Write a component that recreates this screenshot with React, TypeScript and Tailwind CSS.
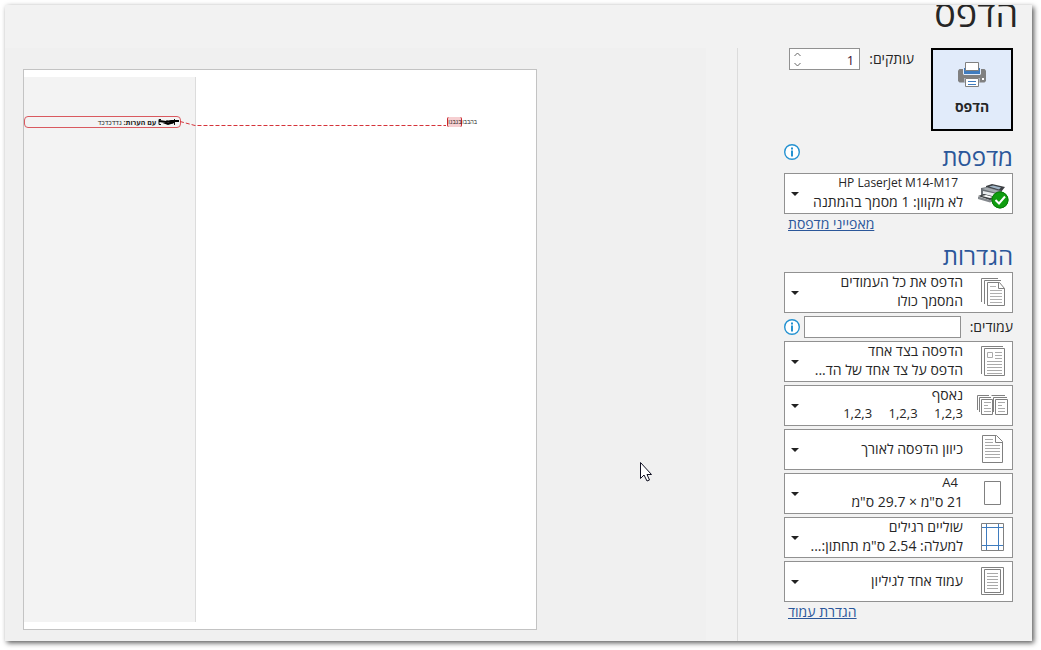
import { useState } from "react";
import type { ReactNode } from "react";

interface SettingProps {
  label: string;
  title: string;
  detail?: string;
  titleClass?: string;
  detailClass?: string;
  icon: ReactNode;
}

// Shared 34x34 canvas for the icons of the settings list
function IconBox({ children }: { children: ReactNode }) {
  return (
    <svg
      viewBox="0 0 34 34"
      className="h-[34px] w-[34px] shrink-0"
      fill="none"
      stroke="#808080"
      aria-hidden="true"
    >
      {children}
    </svg>
  );
}

function PrintIcon() {
  return (
    <svg viewBox="0 0 28 26" className="h-[26px] w-7" fill="none" aria-hidden="true">
      <path d="M1.5 7h25L28 8.5V19l-1.500 1.500h-25L0 19V8.500z" fill="#808080" />
      <path d="M5 6h18v6l-1 1H6l-1-1z" fill="#e1ebfa" />
      <path d="M6 6h16v6H6z" fill="#3f7cbf" />
      <path d="M7.500.500h13v8h-13z" fill="#fff" stroke="#808080" />
      <path d="M6.500 16h15v4.500h-15z" fill="#e1ebfa" />
      <path d="M7.500 16.500h13v8h-13z" fill="#fff" stroke="#808080" />
      <path d="M10 19.500h8M10 22.500h8" stroke="#3f7cbf" />
      <path d="M24 16h2v2h-2z" fill="#fff" />
    </svg>
  );
}

function PrinterStatusIcon() {
  return (
    <IconBox>
      <g stroke="none">
        <path d="M11 10l6-2 13 3-4 5-15-4z" fill="#3c3f43" />
        <path d="M14 10.500l4-1 8 2-2 2z" fill="#9fb4c6" />
        <path d="M6 12l6-1 15 4v7l-10 3-11-5z" fill="#6b7076" />
        <path d="M7 13l5-1.500 12 3.500-4 1.500z" fill="#a5abb0" />
        <path d="M8 15l12 2.500v4L8 18z" fill="#e8ebee" />
        <path d="M3 20l6-2 12 3-6 3z" fill="#3c4044" />
        <path d="M7 20l4-1 7 2-3 1z" fill="#fff" />
        <path d="M3 20.500l12 3.500 6-2v2l-6 2.500L3 23z" fill="#85898e" />
        <circle cx="25" cy="24" r="8.500" fill="#0f9d0f" />
      </g>
      <circle cx="25" cy="24" r="8" stroke="#0a7d0a" />
      <path d="M20.500 24l3.500 3.500 6-7" stroke="#fff" strokeWidth="2" />
    </IconBox>
  );
}

function AllPagesIcon() {
  return (
    <IconBox>
      <path d="M6.500 27V3.500H23M9.500 29V5.500H26" />
      <path d="M12.500 7.500h12l5 6v17h-17z" fill="#fff" />
      <path d="M23.500 7.500v6h6" />
      <path d="M15 11.500h6M15 15.500h12M15 18.500h12M15 21.500h12M15 24.500h12M15 27.500h12" stroke="#b0b0b0" />
    </IconBox>
  );
}

function OneSidedIcon() {
  return (
    <IconBox>
      <path d="M6.500 30V2.500H28" />
      <path d="M9.500 4.500h20v27h-20z" fill="#fff" />
      <path d="M12.500 8.500h5v5h-5zM20 8.500h7M20 11.500h7M20 14.500h7M12 17.500h15M12 20.500h15M12 23.500h15M12 26.500h15M12 29.500h15" stroke="#aaa" />
    </IconBox>
  );
}

function CollatedIcon() {
  return (
    <IconBox>
      <path d="M2.500 22V7.500H14M4.500 24V9.500H16M16.500 7.500H30M18.500 24V9.500H32" />
      <path d="M6.500 11.500h11v15h-11zM20.500 11.500h12v15h-12z" fill="#fff" />
      <path d="M9 14.500h7M9 17.500h4M9 20.500h7M9 23.500h7M23 14.500h7M23 17.500h4M23 20.500h7M23 23.500h7" stroke="#aaa" />
    </IconBox>
  );
}

function PortraitIcon() {
  return (
    <IconBox>
      <path d="M7.500 3.500h14l6 6v21h-20z" fill="#fff" />
      <path d="M20.500 3.500v7h7" />
      <path d="M10 7.500h8M10 10.500h8M10 13.500h15M10 16.500h15M10 19.500h15M10 22.500h15M10 25.500h15" stroke="#aaa" />
    </IconBox>
  );
}

function PaperIcon() {
  return (
    <IconBox>
      <path d="M9.500 5.500h16v23h-16z" />
    </IconBox>
  );
}

function MarginsIcon() {
  return (
    <IconBox>
      <path d="M6.500 3.500h22v27h-22z" />
      <path d="M11.500 4v26M23.500 4v26M7 7.500h21M7 25.500h21" stroke="#3f7cbf" />
    </IconBox>
  );
}

function PerSheetIcon() {
  return (
    <IconBox>
      <path d="M6.500 3.500h22v27h-22zM9.500 5.500h16v23h-16z" />
      <path d="M12 9.500h11M12 12.500h11M12 15.500h11M12 18.500h11M12 21.500h11M12 24.500h11" stroke="#aaa" />
    </IconBox>
  );
}

function InfoButton({ label }: { label: string }) {
  return (
    <button type="button" aria-label={label} className="h-4 w-4 shrink-0">
      <svg viewBox="0 0 16 16" className="h-4 w-4" fill="none" aria-hidden="true">
        <circle cx="8" cy="8" r="7.300" fill="#fff" stroke="#2492d1" strokeWidth="1.400" />
        <path d="M7 3.500h2v2H7zM7 6.500h2v6H7z" fill="#2492d1" />
      </svg>
    </button>
  );
}

function Setting({ label, title, detail, titleClass, detailClass, icon }: SettingProps) {
  return (
    <div className="relative flex h-[41px] items-center border border-[#919191] bg-white pr-[3px] pb-px pl-[6px] focus-within:border-[#2b579a]">
      {icon}
      <div className="min-w-0 flex-1 pr-3 pb-[2px] leading-[19px] whitespace-pre">
        <div className={titleClass}>{title}</div>
        {detail && <div className={detailClass}>{detail}</div>}
      </div>
      <svg viewBox="0 0 8 4" className="mt-[2px] mr-1 h-1 w-2 shrink-0" aria-hidden="true">
        <path d="M0 0h8L4 4z" fill="#222" />
      </svg>
      <select aria-label={label} className="absolute inset-0 h-full w-full cursor-default opacity-0">
        <option>{title}</option>
      </select>
    </div>
  );
}

function Sidebar() {
  const [copies, setCopies] = useState(1);
  const [pages, setPages] = useState("");

  return (
    <aside className="w-[295px] shrink-0 border-l border-[#dcdcdc] pr-[19px] pl-[46px]">
      <div className="flex items-start">
        <button
          type="button"
          className="flex h-[83px] w-[82px] flex-col items-center border-2 border-black bg-[#e1ebfa] pt-3 font-bold"
        >
          <PrintIcon />
          <span className="mt-2 leading-[22px]">הדפס</span>
        </button>
        <label htmlFor="copies" className="mr-[17px] leading-[21px]">
          עותקים:
        </label>
        <div className="mr-[9px] flex h-[22px] w-[71px] items-center border border-[#919191] bg-white">
          <input
            id="copies"
            type="number"
            min={1}
            value={copies}
            onChange={(e) => setCopies(Number(e.target.value))}
            className="w-full min-w-0 [appearance:textfield] bg-transparent pt-[3px] pr-[5px] text-right text-[13px] text-[#3a1030] outline-none [&::-webkit-inner-spin-button]:appearance-none"
          />
          <div className="ml-1 flex flex-col gap-[5px]">
            <button type="button" aria-label="הוסף עותק" onClick={() => setCopies(copies + 1)}>
              <svg viewBox="0 0 7 5" className="h-[5px] w-[7px]" fill="none" stroke="#666">
                <path d="M.500 4l3-3 3 3" />
              </svg>
            </button>
            <button
              type="button"
              aria-label="הפחת עותק"
              onClick={() => setCopies(Math.max(1, copies - 1))}
            >
              <svg viewBox="0 0 7 5" className="h-[5px] w-[7px]" fill="none" stroke="#666">
                <path d="M.500 1l3 3 3-3" />
              </svg>
            </button>
          </div>
        </div>
      </div>

      <div className="mt-[9px] flex h-[33px] items-start justify-between">
        <h2 className="text-[24px] leading-[34px] text-[#2b579a]">מדפסת</h2>
        <div className="pt-1">
          <InfoButton label="מצב המדפסת" />
        </div>
      </div>
      <Setting
        label="מדפסת"
        title="HP LaserJet M14-M17"
        detail="לא מקוון: 1 מסמך בהמתנה"
        titleClass="pr-[5px] text-[12px]"
        icon={<PrinterStatusIcon />}
      />
      <div className="flex h-[22px] justify-end pl-1">
        <a href="#printer" className="leading-[20px] text-[#2b579a] underline">
          מאפייני מדפסת
        </a>
      </div>

      <h2 className="mt-1 h-8 text-[24px] leading-[32px] text-[#2b579a]">הגדרות</h2>
      <div className="flex flex-col gap-[3px]">
        <Setting
          label="טווח הדפסה"
          title="הדפס את כל העמודים"
          detail="המסמך כולו"
          icon={<AllPagesIcon />}
        />
        <div className="flex h-[22px] items-center">
          <label htmlFor="pages" className="w-[52px] shrink-0 pb-[2px]">
            עמודים:
          </label>
          <input
            id="pages"
            type="text"
            value={pages}
            onChange={(e) => setPages(e.target.value)}
            className="ml-1 h-[22px] min-w-0 flex-1 border border-[#919191] bg-white px-1 outline-none"
          />
          <InfoButton label="עזרה לטווח עמודים" />
        </div>
        <Setting
          label="צדדים"
          title="הדפסה בצד אחד"
          detail="הדפס על צד אחד של הד..."
          icon={<OneSidedIcon />}
        />
        <Setting
          label="איסוף"
          title="נאסף"
          detail={"1,2,3\u2003 1,2,3\u2003 1,2,3"}
          detailClass="text-[13px]"
          icon={<CollatedIcon />}
        />
        <Setting label="כיוון" title="כיוון הדפסה לאורך" icon={<PortraitIcon />} />
        <Setting
          label="גודל נייר"
          title="A4"
          detail={'21 ס"מ × 29.7 ס"מ'}
          titleClass="pr-[5px] text-[13px]"
          icon={<PaperIcon />}
        />
        <Setting
          label="שוליים"
          title="שוליים רגילים"
          detail={'למעלה: 2.54 ס"מ תחתון:...'}
          icon={<MarginsIcon />}
        />
        <Setting label="עמודים לגיליון" title="עמוד אחד לגיליון" icon={<PerSheetIcon />} />
      </div>
      <div className="flex h-[22px] justify-end pl-1">
        <a href="#page-setup" className="leading-[20px] text-[#2b579a] underline">
          הגדרת עמוד
        </a>
      </div>
    </aside>
  );
}

function Preview() {
  return (
    <main dir="ltr" className="relative flex min-w-0 flex-1 bg-[#f0f0f0] pt-[21px] pb-[11px] pl-[18px]">
      <article className="relative flex w-[514px] max-w-full border border-[#c3c3c3] bg-white text-[6px] leading-[9px] text-[#222]">
        {/* Markup area with the comment balloon */}
        <div className="my-[7px] w-[172px] shrink-0 border-r border-[#dcdcdc] bg-[#f3f3f3] pt-[39px]">
          <div
            dir="rtl"
            className="flex h-3 w-[157px] items-center rounded-[4px] border border-[#d9595f] text-[7px]"
          >
            <svg viewBox="0 0 22 8" className="h-2 w-[22px]" fill="none" aria-hidden="true">
              <path d="M16.500 1v6M14 2v4M9 2v4M3 1.500h-2v5h2" stroke="#111" />
              <path d="M1 3l7 1 5-1h8M5 4l5 2 6-2" stroke="#000" strokeWidth="2" />
            </svg>
            <span className="font-bold">&nbsp;עם הערות:</span>
            <span>&nbsp;נדדכדכד</span>
          </div>
        </div>
        <p dir="rtl" className="flex-1 pt-12 pr-[59px]">
          בהבבו
          <span className="rounded-[2px] border-x border-[#c8252c] bg-[#f6cfd1] py-px">בנבנו</span>
        </p>
        <svg
          viewBox="0 0 266 6"
          className="absolute top-[51px] left-[156px] h-[6px] w-[266px]"
          fill="none"
          stroke="#d5333a"
          strokeDasharray="4 2"
          aria-hidden="true"
        >
          <path d="M0 .500L15 4.500H266" />
        </svg>
      </article>
      <svg
        viewBox="0 0 12 20"
        className="absolute top-[414px] left-[635px] h-5 w-3"
        aria-hidden="true"
      >
        <path
          d="M.500.500v16l3.500-3.500 3 6 2.500-1-2.500-5.500h4.500z"
          fill="#fff"
          stroke="#111122"
        />
      </svg>
    </main>
  );
}

export default function App() {
  return (
    <div className="h-screen min-h-[650px] bg-white pt-[5px] pr-[9px] pb-[9px] pl-[5px]">
      <div
        dir="rtl"
        className="flex h-full flex-col overflow-hidden bg-[#f2f2f2] font-['Open_Sans','Noto_Sans','Liberation_Sans',sans-serif] text-[14px] text-[#262626] shadow-[2px_2px_5px_rgba(0,0,0,0.65)]"
      >
        <h1 className="h-[43px] shrink-0 pr-[14px] text-[36px] leading-[18px]">הדפס</h1>
        <div className="flex min-h-0 flex-1 gap-[31px]">
          <Sidebar />
          <Preview />
        </div>
      </div>
    </div>
  );
}
